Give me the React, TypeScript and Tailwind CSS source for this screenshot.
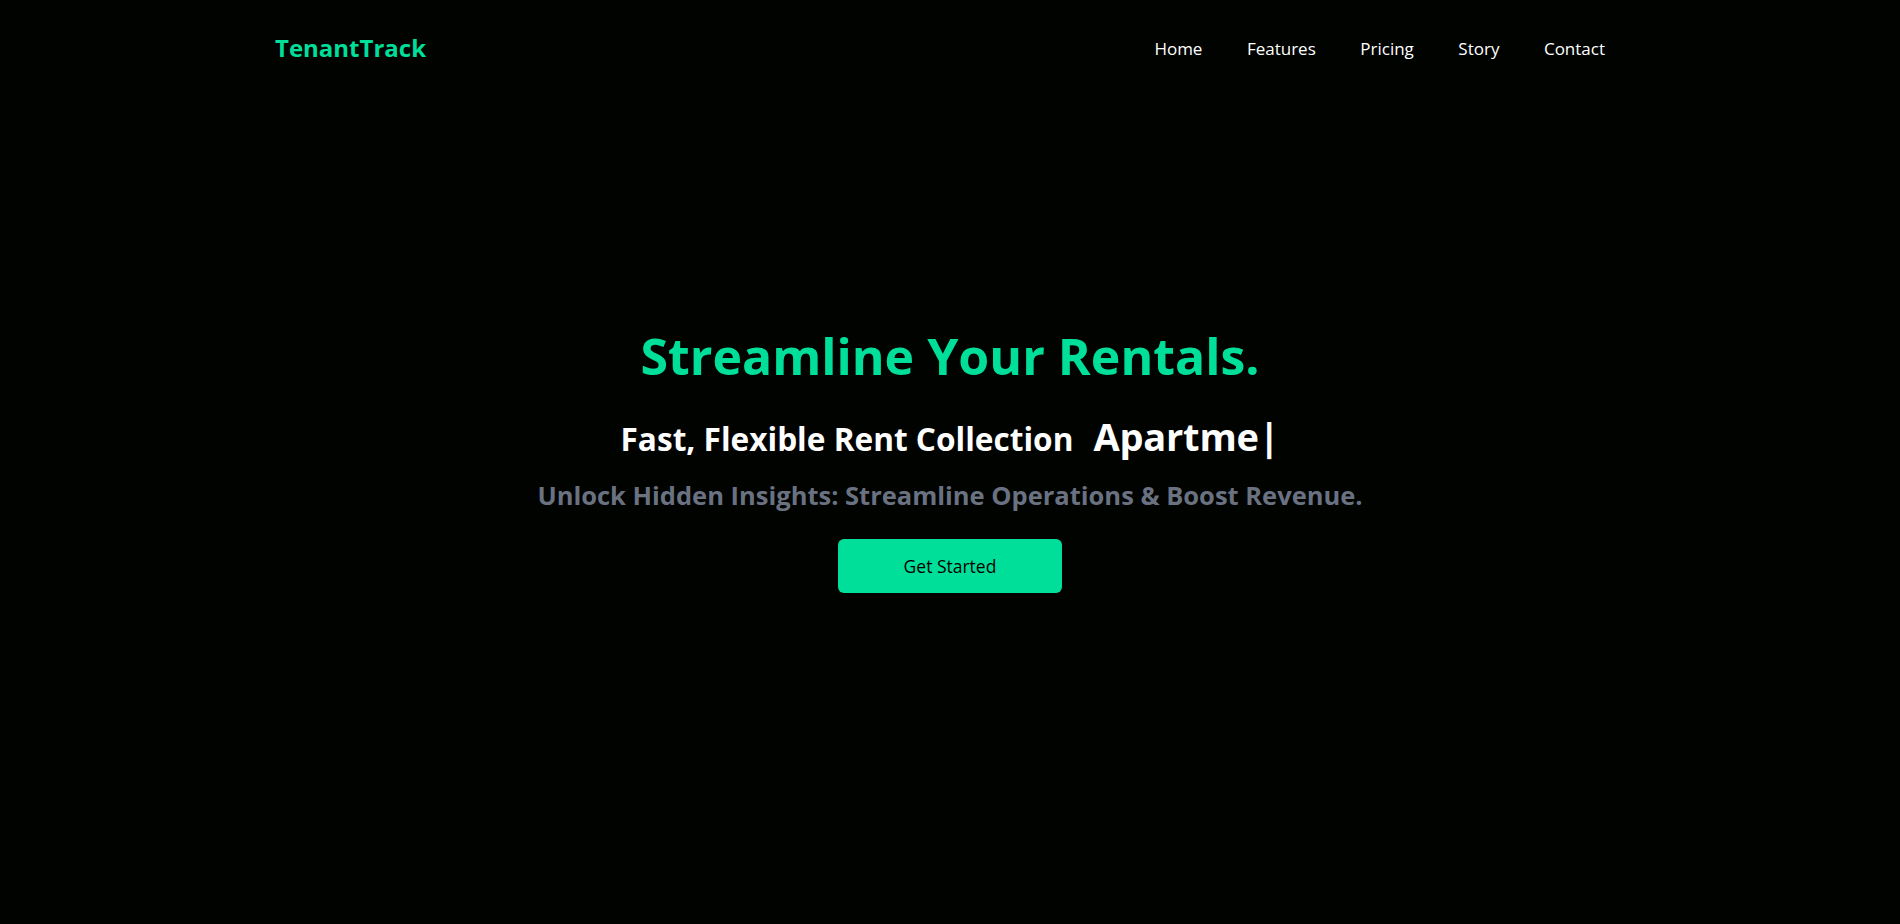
import React from "react";

const links = ["Home", "Features", "Pricing", "Story", "Contact"];

export default function App() {
  return (
    <div className="min-h-screen w-full bg-[#000300] text-white font-['Open_Sans',sans-serif]">
      <nav className="flex h-[96px] items-center justify-between pl-[275px] pr-[295px]">
        <h1 className="text-[24px] font-bold text-[#00df9a] leading-none">TenantTrack</h1>
        <ul className="flex items-center gap-[44.5px] text-[17px] leading-none">
          {links.map((l) => (
            <li key={l} className="cursor-pointer">
              {l}
            </li>
          ))}
        </ul>
      </nav>

      <div className="mx-auto flex w-full flex-col items-center pt-[230px] text-center">
        <h1 className="text-[50px] font-bold leading-[60px] text-[#00df9a]">Streamline Your Rentals.</h1>
        <div className="mt-[28px] flex items-baseline justify-center">
          <p className="text-[31.6px] font-bold leading-[44px]">Fast, Flexible Rent Collection</p>
          <span className="ml-[20px] text-[38px] font-bold leading-[44px] tracking-[-0.2px]">Apartme|</span>
        </div>
        <p className="mt-[17px] text-[25.5px] font-bold leading-[34px] text-gray-500">
          Unlock Hidden Insights: Streamline Operations &amp; Boost Revenue.
        </p>
        <button className="mt-[27px] h-[54px] w-[224px] rounded-md bg-[#00df9a] text-[17.5px] font-medium text-black">
          Get Started
        </button>
      </div>
    </div>
  );
}
